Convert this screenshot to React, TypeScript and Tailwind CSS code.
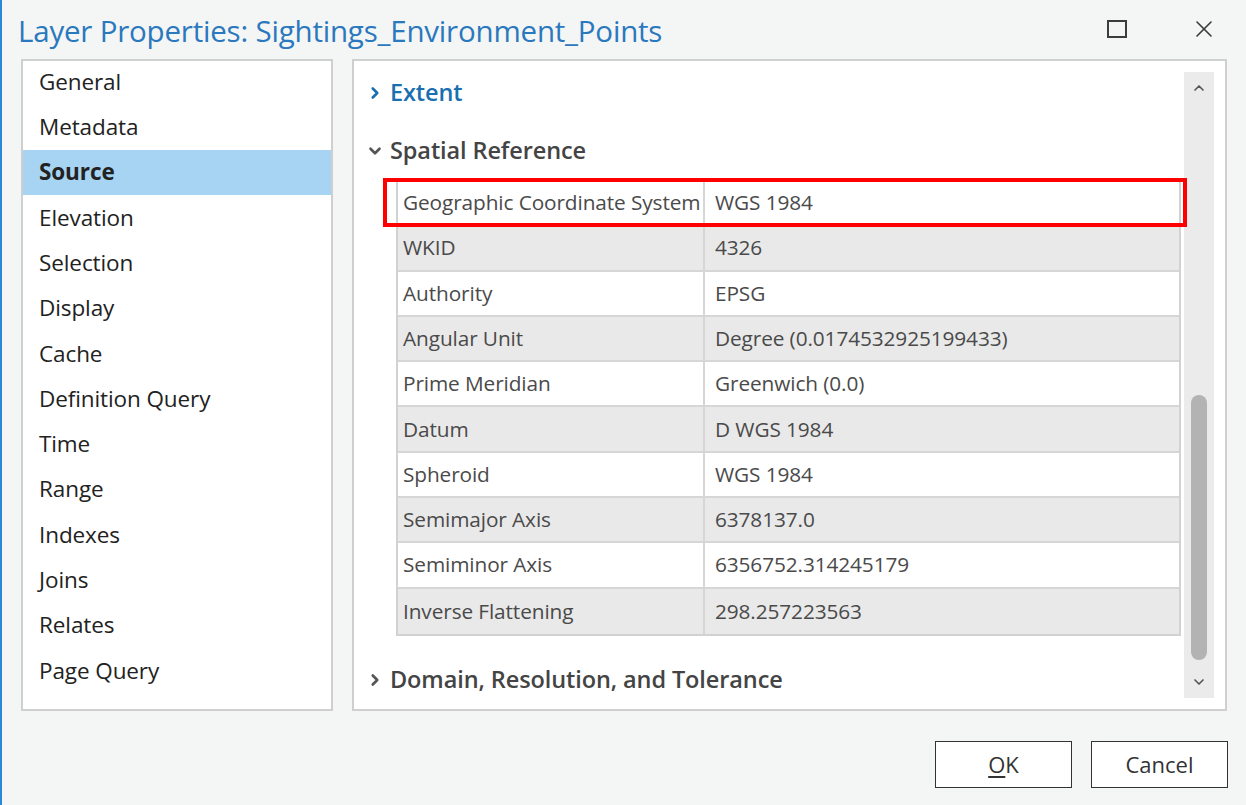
import { ChevronRight, ChevronDown, ChevronUp, X } from "lucide-react";

const navItems = [
  "General",
  "Metadata",
  "Source",
  "Elevation",
  "Selection",
  "Display",
  "Cache",
  "Definition Query",
  "Time",
  "Range",
  "Indexes",
  "Joins",
  "Relates",
  "Page Query",
];

const rows: [string, string][] = [
  ["Geographic Coordinate System", "WGS 1984"],
  ["WKID", "4326"],
  ["Authority", "EPSG"],
  ["Angular Unit", "Degree (0.0174532925199433)"],
  ["Prime Meridian", "Greenwich (0.0)"],
  ["Datum", "D WGS 1984"],
  ["Spheroid", "WGS 1984"],
  ["Semimajor Axis", "6378137.0"],
  ["Semiminor Axis", "6356752.314245179"],
  ["Inverse Flattening", "298.257223563"],
];

export default function App() {
  return (
    <div className="w-[1246px] h-[805px] bg-[#f4f5f5] border-l-2 border-[#2a88d8] flex flex-col font-['Open_Sans',sans-serif] overflow-hidden">
      {/* title bar */}
      <div className="h-[59px] flex items-center pl-[16px] pr-[28px]">
        <h1 className="text-[29.5px] text-[#2a78bd] tracking-[-0.2px] flex-1 leading-none pt-[3px]">
          Layer Properties: Sightings_Environment_Points
        </h1>
        <div className="w-[20px] h-[18px] border-2 border-[#3c3c3c] mr-[63px] mb-[2px]" />
        <X className="w-[28px] h-[28px] text-[#3c3c3c] mb-[2px]" strokeWidth={1.4} />
      </div>

      <div className="flex h-[652px] pl-[19px]">
        {/* left nav */}
        <div className="w-[312px] h-full bg-white border-2 border-[#cfcfcf]">
          <ul className="-mt-[2px]">
            {navItems.map((item) => (
              <li
                key={item}
                className={
                  "h-[45.3px] flex items-center pl-[16px] text-[22.5px] text-[#222] tracking-[-0.1px] " +
                  (item === "Source" ? "bg-[#a6d4f2] font-bold" : "")
                }
              >
                {item}
              </li>
            ))}
          </ul>
        </div>

        {/* right content */}
        <div className="ml-[19px] w-[875px] h-full bg-white border-2 border-[#cfcfcf] flex">
          <div className="flex-1 relative">
            <div className="h-[62px] flex items-center pl-[12px] pt-[2px]">
              <ChevronRight className="w-[18px] h-[18px] text-[#1a6fb0]" strokeWidth={3.5} />
              <span className="ml-[6px] text-[23.5px] font-semibold text-[#1a6fb0] tracking-[-0.1px]">Extent</span>
            </div>
            <div className="h-[55px] flex items-center pl-[12px]">
              <ChevronDown className="w-[18px] h-[18px] text-[#555]" strokeWidth={3.5} />
              <span className="ml-[6px] text-[23.5px] font-semibold text-[#444] tracking-[-0.1px]">Spatial Reference</span>
            </div>

            <div className="relative ml-[42px] mt-[3px] w-[785px]">
              <div className="border-l-2 border-r-2 border-b-2 border-[#d2d2d2]">
                {rows.map(([k, v], i) => (
                  <div
                    key={k}
                    className={
                      "h-[45.3px] flex text-[20.8px] text-[#4a4a4a] tracking-[-0.1px] border-b-2 border-[#d6d6d6] last:border-b-0 " +
                      (i % 2 === 1 ? "bg-[#e9e9e9]" : "bg-white")
                    }
                  >
                    <div className="w-[307px] flex items-center pl-[5px] border-r-2 border-[#d6d6d6]">{k}</div>
                    <div className="flex-1 flex items-center pl-[10px]">{v}</div>
                  </div>
                ))}
              </div>
              <div className="absolute -left-[13px] -top-[3px] w-[804px] h-[49px] border-4 border-[#ff0000] z-10" />
            </div>

            <div className="h-[60px] flex items-center pl-[12px] mt-[14px]">
              <ChevronRight className="w-[18px] h-[18px] text-[#555]" strokeWidth={3.5} />
              <span className="ml-[6px] text-[23.5px] font-semibold text-[#444] tracking-[-0.1px]">
                Domain, Resolution, and Tolerance
              </span>
            </div>
          </div>

          {/* scrollbar */}
          <div className="w-[30px] mt-[11px] mb-[11px] mr-[11px] bg-[#ebebeb] flex flex-col items-center">
            <ChevronUp className="w-[16px] h-[16px] text-[#555] mt-[8px]" strokeWidth={2.5} />
            <div className="flex-1" />
            <div className="w-[16px] h-[265px] rounded-full bg-[#b3b3b3]" />
            <ChevronDown className="w-[16px] h-[16px] text-[#555] mt-[14px] mb-[8px]" strokeWidth={2.5} />
          </div>
        </div>
      </div>

      {/* buttons */}
      <div className="flex justify-end gap-[19px] pr-[18px] mt-[30px]">
        <button className="w-[137px] h-[47px] bg-white border border-[#333] text-[22px] text-[#333]">
          <span className="underline underline-offset-[3px]">O</span>K
        </button>
        <button className="w-[137px] h-[47px] bg-white border border-[#333] text-[22px] text-[#333]">
          Cancel
        </button>
      </div>
    </div>
  );
}
